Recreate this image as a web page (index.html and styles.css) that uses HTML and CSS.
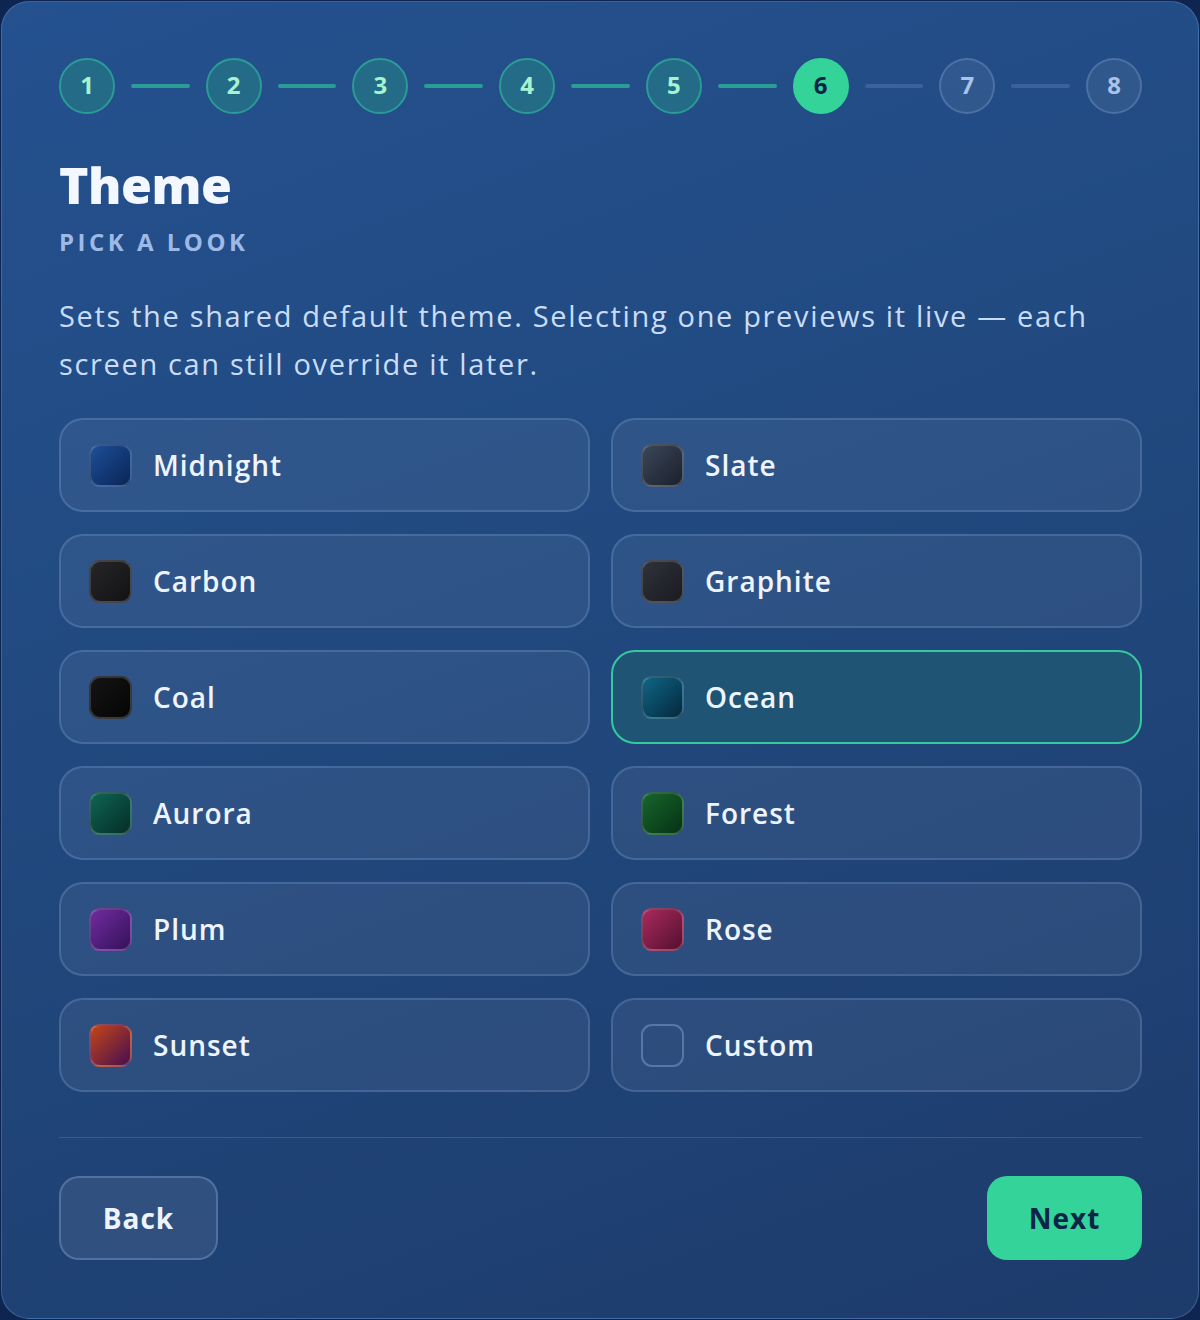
FILE: index.html
```html
<!DOCTYPE html>
<html lang="en">
<head>
<meta charset="utf-8">
<title>Theme</title>
<link rel="stylesheet" href="styles.css">
</head>
<body>
<div class="card">
  <div class="stepper">
    <div class="step done">1</div><div class="conn done"></div>
    <div class="step done">2</div><div class="conn done"></div>
    <div class="step done">3</div><div class="conn done"></div>
    <div class="step done">4</div><div class="conn done"></div>
    <div class="step done">5</div><div class="conn done"></div>
    <div class="step current">6</div><div class="conn"></div>
    <div class="step">7</div><div class="conn"></div>
    <div class="step">8</div>
  </div>

  <h1 class="title">Theme</h1>
  <div class="eyebrow">PICK A LOOK</div>
  <p class="desc">Sets the shared default theme. Selecting one previews it live — each screen can still override it later.</p>

  <div class="grid">
    <div class="opt"><span class="sw sw-midnight"></span><span class="label">Midnight</span></div>
    <div class="opt"><span class="sw sw-slate"></span><span class="label">Slate</span></div>
    <div class="opt"><span class="sw sw-carbon"></span><span class="label">Carbon</span></div>
    <div class="opt"><span class="sw sw-graphite"></span><span class="label">Graphite</span></div>
    <div class="opt"><span class="sw sw-coal"></span><span class="label">Coal</span></div>
    <div class="opt selected"><span class="sw sw-ocean"></span><span class="label">Ocean</span></div>
    <div class="opt"><span class="sw sw-aurora"></span><span class="label">Aurora</span></div>
    <div class="opt"><span class="sw sw-forest"></span><span class="label">Forest</span></div>
    <div class="opt"><span class="sw sw-plum"></span><span class="label">Plum</span></div>
    <div class="opt"><span class="sw sw-rose"></span><span class="label">Rose</span></div>
    <div class="opt"><span class="sw sw-sunset"></span><span class="label">Sunset</span></div>
    <div class="opt"><span class="sw sw-custom"></span><span class="label">Custom</span></div>
  </div>

  <div class="divider"></div>

  <div class="actions">
    <button class="btn btn-back">Back</button>
    <button class="btn btn-next">Next</button>
  </div>
</div>
</body>
</html>
```

FILE: styles.css
```css
html, body {
  margin: 0;
  padding: 0;
}
body {
  background: #0d2550;
  padding: 1px;
  font-family: "Open Sans", "Noto Sans", sans-serif;
  color: #eaf2ff;
}
.card {
  box-sizing: border-box;
  width: 1198px;
  height: 1318px;
  border-radius: 28px;
  border: 1px solid rgba(150, 185, 240, 0.28);
  background: linear-gradient(160deg, #24518f 0%, #21497f 45%, #1d3b6b 100%);
  padding: 56px 56px 56px 57px;
  display: flex;
  flex-direction: column;
}
.stepper {
  display: flex;
  align-items: center;
  height: 56px;
}
.step {
  box-sizing: border-box;
  width: 56px;
  height: 56px;
  flex: 0 0 56px;
  border-radius: 50%;
  display: flex;
  align-items: center;
  justify-content: center;
  font-weight: 700;
  font-size: 24px;
  line-height: 1;
  padding-bottom: 3px;
  border: 2px solid rgba(170, 200, 245, 0.22);
  background: rgba(255, 255, 255, 0.07);
  color: #a9c3ea;
}
.step.done {
  background: #236b87;
  border-color: #2b9b95;
  color: #a7f3d0;
}
.step.current {
  background: #34d399;
  border-color: #34d399;
  color: #0b2447;
}
.conn {
  flex: 1;
  height: 4px;
  margin: 0 16px;
  border-radius: 2px;
  background: rgba(170, 200, 245, 0.18);
}
.conn.done {
  background: #2a9e95;
}
.title {
  margin: 43px 0 0 0;
  font-size: 50px;
  line-height: 56px;
  font-weight: 800;
  color: #f3f7ff;
  letter-spacing: -0.5px;
}
.eyebrow {
  margin-top: 13px;
  font-size: 24px;
  line-height: 32px;
  font-weight: 700;
  letter-spacing: 3.5px;
  color: #9db9e6;
}
.desc {
  margin: 34px 0 0 0;
  font-size: 29px;
  line-height: 48px;
  letter-spacing: 1.65px;
  color: #c9dcf7;
}
.grid {
  margin-top: 30px;
  display: grid;
  grid-template-columns: 1fr 1fr;
  column-gap: 21px;
  row-gap: 22px;
}
.opt {
  box-sizing: border-box;
  height: 94px;
  border-radius: 24px;
  border: 2px solid rgba(160, 190, 240, 0.22);
  background: rgba(255, 255, 255, 0.06);
  display: flex;
  align-items: center;
  padding-left: 28px;
}
.opt.selected {
  border-color: #34c9a0;
  background: #1f5474;
}
.sw {
  box-sizing: border-box;
  width: 43px;
  height: 43px;
  flex: 0 0 43px;
  border-radius: 11px;
  border: 2px solid rgba(255, 255, 255, 0.18);
}
.label {
  margin-left: 21px;
  font-size: 28px;
  font-weight: 600;
  letter-spacing: 1px;
  color: #eef4ff;
}
.sw-midnight { background: linear-gradient(135deg, #1c4f97, #0a2558); }
.sw-slate { background: linear-gradient(135deg, #3b4658, #1b212c); }
.sw-carbon { background: linear-gradient(135deg, #262629, #121214); }
.sw-graphite { background: linear-gradient(135deg, #30323a, #1a1b21); }
.sw-coal { background: linear-gradient(135deg, #141414, #050505); }
.sw-ocean { background: linear-gradient(135deg, #0f6585, #05283d); }
.sw-aurora { background: linear-gradient(135deg, #0f6452, #052e28); }
.sw-forest { background: linear-gradient(135deg, #17662d, #063214); }
.sw-plum { background: linear-gradient(135deg, #6f2ca0, #35115a); }
.sw-rose { background: linear-gradient(135deg, #a82a5c, #55102f); }
.sw-sunset { background: linear-gradient(135deg, #c44418, #461050); }
.sw-custom { background: transparent; border-color: rgba(170, 200, 245, 0.35); }
.divider {
  margin-top: 45px;
  height: 1px;
  background: rgba(160, 190, 240, 0.2);
}
.actions {
  margin-top: 38px;
  display: flex;
  justify-content: space-between;
}
.btn {
  box-sizing: border-box;
  height: 84px;
  border-radius: 20px;
  font-family: "Open Sans", "Noto Sans", sans-serif;
  font-size: 28px;
  font-weight: 700;
  letter-spacing: 1px;
  cursor: pointer;
}
.btn-back {
  width: 159px;
  border: 2px solid rgba(160, 190, 240, 0.3);
  background: rgba(255, 255, 255, 0.08);
  color: #eef4ff;
}
.btn-next {
  width: 155px;
  border: none;
  background: #34d399;
  color: #0b2447;
}
```
